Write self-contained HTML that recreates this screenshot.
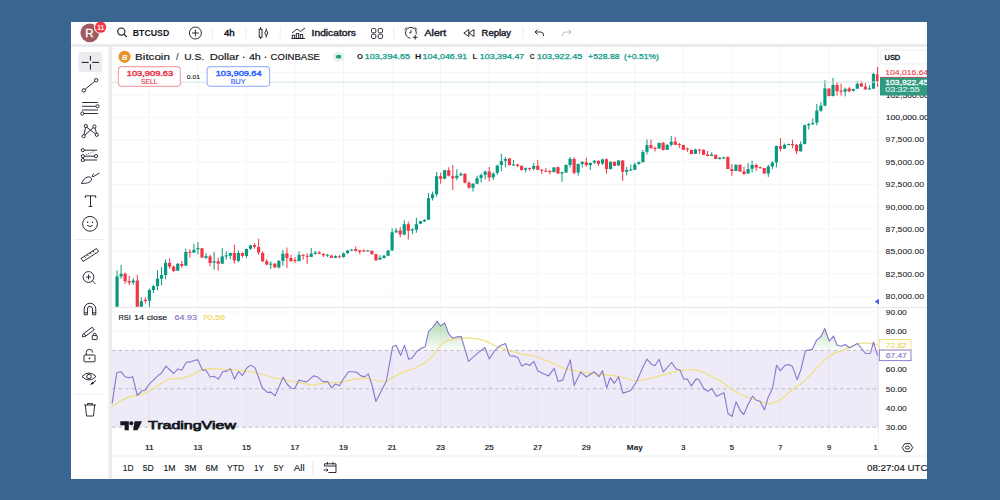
<!DOCTYPE html>
<html><head><meta charset="utf-8"><title>TradingView BTCUSD</title>
<style>
html,body{margin:0;padding:0;width:1000px;height:500px;overflow:hidden;background:#3b6591;}
svg{display:block;}
text{font-family:"Liberation Sans", sans-serif;}
</style></head>
<body>
<svg width="1000" height="500" viewBox="0 0 1000 500">
<defs><clipPath id="cmain"><rect x="112" y="47" width="766.5" height="260"/></clipPath></defs>
<rect x="0" y="0" width="1000" height="500" fill="#3b6591"/>
<defs><clipPath id="cpanel"><rect x="71" y="22" width="856" height="457"/></clipPath></defs><g clip-path="url(#cpanel)">
<rect x="71" y="22" width="856" height="457" fill="#ebebed"/>
<rect x="71" y="22" width="856" height="22" fill="#ffffff"/>
<rect x="71" y="47" width="37.5" height="432" fill="#ffffff"/>
<rect x="112" y="47" width="815" height="432" fill="#ffffff"/>
<line x1="149.3" y1="47" x2="149.3" y2="432" stroke="#f5f5f7" stroke-width="1"/>
<line x1="197.9" y1="47" x2="197.9" y2="432" stroke="#f5f5f7" stroke-width="1"/>
<line x1="246.4" y1="47" x2="246.4" y2="432" stroke="#f5f5f7" stroke-width="1"/>
<line x1="294.9" y1="47" x2="294.9" y2="432" stroke="#f5f5f7" stroke-width="1"/>
<line x1="343.5" y1="47" x2="343.5" y2="432" stroke="#f5f5f7" stroke-width="1"/>
<line x1="392.1" y1="47" x2="392.1" y2="432" stroke="#f5f5f7" stroke-width="1"/>
<line x1="440.6" y1="47" x2="440.6" y2="432" stroke="#f5f5f7" stroke-width="1"/>
<line x1="489.1" y1="47" x2="489.1" y2="432" stroke="#f5f5f7" stroke-width="1"/>
<line x1="537.7" y1="47" x2="537.7" y2="432" stroke="#f5f5f7" stroke-width="1"/>
<line x1="586.2" y1="47" x2="586.2" y2="432" stroke="#f5f5f7" stroke-width="1"/>
<line x1="634.8" y1="47" x2="634.8" y2="432" stroke="#f5f5f7" stroke-width="1"/>
<line x1="683.3" y1="47" x2="683.3" y2="432" stroke="#f5f5f7" stroke-width="1"/>
<line x1="731.9" y1="47" x2="731.9" y2="432" stroke="#f5f5f7" stroke-width="1"/>
<line x1="780.5" y1="47" x2="780.5" y2="432" stroke="#f5f5f7" stroke-width="1"/>
<line x1="829.0" y1="47" x2="829.0" y2="432" stroke="#f5f5f7" stroke-width="1"/>
<line x1="877.5" y1="47" x2="877.5" y2="432" stroke="#f5f5f7" stroke-width="1"/>
<line x1="112" y1="72.6" x2="878" y2="72.6" stroke="#f5f5f7" stroke-width="1"/>
<line x1="112" y1="94.9" x2="878" y2="94.9" stroke="#f5f5f7" stroke-width="1"/>
<line x1="112" y1="117.3" x2="878" y2="117.3" stroke="#f5f5f7" stroke-width="1"/>
<line x1="112" y1="139.7" x2="878" y2="139.7" stroke="#f5f5f7" stroke-width="1"/>
<line x1="112" y1="162.0" x2="878" y2="162.0" stroke="#f5f5f7" stroke-width="1"/>
<line x1="112" y1="184.4" x2="878" y2="184.4" stroke="#f5f5f7" stroke-width="1"/>
<line x1="112" y1="206.7" x2="878" y2="206.7" stroke="#f5f5f7" stroke-width="1"/>
<line x1="112" y1="229.1" x2="878" y2="229.1" stroke="#f5f5f7" stroke-width="1"/>
<line x1="112" y1="251.4" x2="878" y2="251.4" stroke="#f5f5f7" stroke-width="1"/>
<line x1="112" y1="273.8" x2="878" y2="273.8" stroke="#f5f5f7" stroke-width="1"/>
<line x1="112" y1="296.1" x2="878" y2="296.1" stroke="#f5f5f7" stroke-width="1"/>
<line x1="878.5" y1="47" x2="878.5" y2="456" stroke="#f0f0f3" stroke-width="1"/>
<line x1="112" y1="307.5" x2="927" y2="307.5" stroke="#e6e6ea" stroke-width="1"/>
<line x1="112" y1="456" x2="927" y2="456" stroke="#f0f0f2" stroke-width="1"/>
<rect x="112" y="350.4" width="766.5" height="76.8" fill="#7e57c2" fill-opacity="0.125"/>
<line x1="112" y1="312.0" x2="878" y2="312.0" stroke="#f5f5f7" stroke-width="1"/>
<line x1="112" y1="331.2" x2="878" y2="331.2" stroke="#f5f5f7" stroke-width="1"/>
<line x1="112" y1="350.4" x2="878" y2="350.4" stroke="#bdbdc5" stroke-width="1" stroke-dasharray="3.5 3"/>
<line x1="112" y1="388.8" x2="878" y2="388.8" stroke="#bdbdc5" stroke-width="1" stroke-dasharray="3.5 3"/>
<line x1="112" y1="427.2" x2="878" y2="427.2" stroke="#bdbdc5" stroke-width="1" stroke-dasharray="3.5 3"/>
<defs><linearGradient id="gob" gradientUnits="userSpaceOnUse" x1="0" y1="321" x2="0" y2="350.4"><stop offset="0" stop-color="#66b96a" stop-opacity="0.5"/><stop offset="1" stop-color="#66b96a" stop-opacity="0.03"/></linearGradient><clipPath id="cob"><rect x="112" y="300" width="766" height="50.4"/></clipPath></defs>
<polygon points="112.1,350.4 112.1,403.6 116.7,372.8 120.9,371.7 125.1,376.7 128.9,377.7 132.7,376.7 137.3,395.5 142.2,390.7 145.0,390.3 149.9,383.3 158.3,375.3 161.1,373.5 166.0,366.1 173.7,373.5 177.9,368.9 181.7,370.3 186.3,362.3 190.5,361.9 194.7,360.2 198.0,359.9 202.4,370.3 205.9,370.0 210.1,377.0 213.9,376.3 218.5,379.1 222.7,371.7 226.9,371.1 230.4,368.6 234.6,379.1 238.6,371.4 242.4,375.6 246.6,368.3 250.6,365.1 255.1,367.9 262.5,388.2 267.4,392.4 270.9,392.1 275.1,395.9 283.1,377.3 287.0,384.0 291.2,388.2 294.7,388.5 298.9,380.1 303.1,381.2 306.6,381.9 313.6,375.9 317.1,376.7 323.4,381.9 327.6,381.5 331.6,387.9 335.3,384.0 339.5,385.7 343.0,379.5 348.4,371.7 353.5,371.7 357.0,372.5 360.5,375.6 364.7,376.9 368.2,373.9 371.7,384.0 375.9,401.5 386.3,381.3 392.6,346.7 396.1,345.3 400.7,355.4 404.5,345.3 408.7,359.3 412.2,357.9 417.1,351.2 421.3,348.1 425.1,347.0 428.7,330.9 432.5,327.7 437.1,321.1 440.5,326.0 444.7,322.9 448.6,333.7 452.8,338.3 456.7,336.9 461.2,336.5 468.5,361.3 475.2,355.4 480.1,351.2 485.0,347.7 489.2,358.9 495.5,349.8 499.7,345.9 505.4,343.5 509.6,355.7 513.8,356.1 517.8,357.4 521.7,366.1 526.2,363.7 529.7,365.5 533.9,361.3 537.7,370.7 543.0,373.5 548.6,375.9 554.2,368.3 558.1,381.5 562.6,380.1 570.3,359.9 574.1,385.4 580.8,372.1 586.4,377.0 594.1,371.7 599.0,376.7 602.5,370.7 606.7,387.9 610.2,377.7 614.4,383.3 618.6,376.7 622.8,393.1 630.5,390.7 636.8,381.2 643.2,366.5 646.9,359.1 651.6,364.4 654.9,365.7 659.1,359.3 663.3,371.9 671.7,362.5 675.9,368.8 680.1,370.2 683.6,378.9 687.5,379.3 691.3,385.9 696.2,378.9 699.0,379.7 704.0,389.0 707.8,391.2 711.8,388.5 716.5,396.2 724.0,392.8 728.0,413.5 732.0,416.5 736.0,401.8 740.5,411.0 743.8,414.5 748.0,404.5 752.5,396.2 756.0,400.0 760.0,401.2 764.5,409.8 768.0,397.8 772.5,388.5 776.6,365.2 780.4,370.6 785.2,365.2 788.8,364.6 792.4,366.4 797.2,379.6 800.8,370.0 805.4,350.8 812.2,349.4 816.5,340.2 821.0,336.5 824.8,328.5 829.2,341.2 833.5,336.0 837.0,345.0 841.0,346.2 845.0,344.5 849.5,347.8 857.5,343.5 862.0,349.0 865.5,353.5 870.5,353.2 873.5,342.0 877.5,355.3 877.5,350.4" fill="url(#gob)" clip-path="url(#cob)"/>
<polyline points="112.0,406.5 114.2,405.0 122.6,399.7 129.6,396.6 138.0,395.2 145.0,393.5 152.0,389.6 160.4,384.0 168.8,379.1 182.8,378.1 191.2,375.6 201.0,370.0 208.0,368.6 222.0,369.3 236.0,370.0 250.0,371.7 259.0,373.5 273.0,377.7 287.0,380.5 301.0,382.9 312.2,385.1 326.2,382.6 340.2,382.3 354.2,379.1 366.8,378.1 375.2,380.5 385.6,382.0 394.0,376.7 401.0,372.9 415.0,368.0 424.8,363.1 431.8,356.8 438.8,347.7 444.4,341.7 452.8,339.3 464.0,337.9 478.0,338.9 486.4,341.4 496.2,346.3 506.0,349.8 515.0,352.1 522.0,354.3 534.6,356.0 550.0,361.9 564.0,368.3 578.0,371.7 593.4,373.9 613.0,375.6 621.4,377.0 632.6,380.5 641.0,380.1 650.0,378.3 664.0,374.7 678.0,370.9 689.2,369.5 696.2,369.9 706.0,373.7 720.0,380.7 731.2,388.7 741.0,394.7 750.8,398.5 762.0,402.1 769.0,403.8 776.0,402.2 785.0,396.5 792.4,389.2 802.0,383.2 810.4,374.8 820.0,364.6 826.4,358.4 834.4,353.1 844.0,349.9 852.0,346.4 858.4,343.5 866.4,342.9 877.5,344.5" fill="none" stroke="#f2df80" stroke-width="1.2" stroke-linejoin="round"/>
<polyline points="112.1,403.6 116.7,372.8 120.9,371.7 125.1,376.7 128.9,377.7 132.7,376.7 137.3,395.5 142.2,390.7 145.0,390.3 149.9,383.3 158.3,375.3 161.1,373.5 166.0,366.1 173.7,373.5 177.9,368.9 181.7,370.3 186.3,362.3 190.5,361.9 194.7,360.2 198.0,359.9 202.4,370.3 205.9,370.0 210.1,377.0 213.9,376.3 218.5,379.1 222.7,371.7 226.9,371.1 230.4,368.6 234.6,379.1 238.6,371.4 242.4,375.6 246.6,368.3 250.6,365.1 255.1,367.9 262.5,388.2 267.4,392.4 270.9,392.1 275.1,395.9 283.1,377.3 287.0,384.0 291.2,388.2 294.7,388.5 298.9,380.1 303.1,381.2 306.6,381.9 313.6,375.9 317.1,376.7 323.4,381.9 327.6,381.5 331.6,387.9 335.3,384.0 339.5,385.7 343.0,379.5 348.4,371.7 353.5,371.7 357.0,372.5 360.5,375.6 364.7,376.9 368.2,373.9 371.7,384.0 375.9,401.5 386.3,381.3 392.6,346.7 396.1,345.3 400.7,355.4 404.5,345.3 408.7,359.3 412.2,357.9 417.1,351.2 421.3,348.1 425.1,347.0 428.7,330.9 432.5,327.7 437.1,321.1 440.5,326.0 444.7,322.9 448.6,333.7 452.8,338.3 456.7,336.9 461.2,336.5 468.5,361.3 475.2,355.4 480.1,351.2 485.0,347.7 489.2,358.9 495.5,349.8 499.7,345.9 505.4,343.5 509.6,355.7 513.8,356.1 517.8,357.4 521.7,366.1 526.2,363.7 529.7,365.5 533.9,361.3 537.7,370.7 543.0,373.5 548.6,375.9 554.2,368.3 558.1,381.5 562.6,380.1 570.3,359.9 574.1,385.4 580.8,372.1 586.4,377.0 594.1,371.7 599.0,376.7 602.5,370.7 606.7,387.9 610.2,377.7 614.4,383.3 618.6,376.7 622.8,393.1 630.5,390.7 636.8,381.2 643.2,366.5 646.9,359.1 651.6,364.4 654.9,365.7 659.1,359.3 663.3,371.9 671.7,362.5 675.9,368.8 680.1,370.2 683.6,378.9 687.5,379.3 691.3,385.9 696.2,378.9 699.0,379.7 704.0,389.0 707.8,391.2 711.8,388.5 716.5,396.2 724.0,392.8 728.0,413.5 732.0,416.5 736.0,401.8 740.5,411.0 743.8,414.5 748.0,404.5 752.5,396.2 756.0,400.0 760.0,401.2 764.5,409.8 768.0,397.8 772.5,388.5 776.6,365.2 780.4,370.6 785.2,365.2 788.8,364.6 792.4,366.4 797.2,379.6 800.8,370.0 805.4,350.8 812.2,349.4 816.5,340.2 821.0,336.5 824.8,328.5 829.2,341.2 833.5,336.0 837.0,345.0 841.0,346.2 845.0,344.5 849.5,347.8 857.5,343.5 862.0,349.0 865.5,353.5 870.5,353.2 873.5,342.0 877.5,355.3" fill="none" stroke="#8677cd" stroke-width="1.1" stroke-linejoin="round"/>
<g clip-path="url(#cmain)">
<rect x="116.55" y="270.4" width="1" height="36.3" fill="#089981"/>
<rect x="115.45" y="276.5" width="3.2" height="30.2" fill="#089981"/>
<rect x="120.59" y="264.9" width="1" height="13.8" fill="#089981"/>
<rect x="119.50" y="273.9" width="3.2" height="2.6" fill="#089981"/>
<rect x="124.64" y="272.6" width="1" height="11.2" fill="#f23645"/>
<rect x="123.54" y="273.7" width="3.2" height="7.5" fill="#f23645"/>
<rect x="128.69" y="275.9" width="1" height="9.4" fill="#f23645"/>
<rect x="127.59" y="281.2" width="3.2" height="1.5" fill="#f23645"/>
<rect x="132.73" y="278.1" width="1" height="6.8" fill="#089981"/>
<rect x="131.63" y="280.5" width="3.2" height="2.0" fill="#089981"/>
<rect x="136.78" y="274.8" width="1" height="31.9" fill="#f23645"/>
<rect x="135.68" y="280.5" width="3.2" height="26.2" fill="#f23645"/>
<rect x="140.82" y="297.4" width="1" height="9.3" fill="#089981"/>
<rect x="139.72" y="301.2" width="3.2" height="5.5" fill="#089981"/>
<rect x="144.87" y="297.4" width="1" height="6.0" fill="#f23645"/>
<rect x="143.77" y="299.9" width="3.2" height="1.1" fill="#f23645"/>
<rect x="148.91" y="288.6" width="1" height="18.4" fill="#089981"/>
<rect x="147.81" y="290.0" width="3.2" height="10.7" fill="#089981"/>
<rect x="152.95" y="284.7" width="1" height="8.3" fill="#089981"/>
<rect x="151.85" y="286.1" width="3.2" height="3.9" fill="#089981"/>
<rect x="157.00" y="270.4" width="1" height="19.8" fill="#089981"/>
<rect x="155.90" y="278.7" width="3.2" height="7.4" fill="#089981"/>
<rect x="161.04" y="267.1" width="1" height="18.2" fill="#089981"/>
<rect x="159.94" y="275.0" width="3.2" height="3.7" fill="#089981"/>
<rect x="165.09" y="259.4" width="1" height="19.8" fill="#089981"/>
<rect x="163.99" y="262.7" width="3.2" height="12.3" fill="#089981"/>
<rect x="169.13" y="258.3" width="1" height="10.5" fill="#f23645"/>
<rect x="168.03" y="262.9" width="3.2" height="3.7" fill="#f23645"/>
<rect x="173.18" y="265.5" width="1" height="6.5" fill="#f23645"/>
<rect x="172.08" y="266.6" width="3.2" height="4.4" fill="#f23645"/>
<rect x="177.22" y="263.0" width="1" height="8.0" fill="#089981"/>
<rect x="176.12" y="263.8" width="3.2" height="6.8" fill="#089981"/>
<rect x="181.27" y="261.0" width="1" height="6.7" fill="#f23645"/>
<rect x="180.17" y="264.0" width="3.2" height="1.8" fill="#f23645"/>
<rect x="185.31" y="248.7" width="1" height="17.0" fill="#089981"/>
<rect x="184.22" y="252.0" width="3.2" height="13.7" fill="#089981"/>
<rect x="189.36" y="249.2" width="1" height="8.3" fill="#f23645"/>
<rect x="188.26" y="251.7" width="3.2" height="1.0" fill="#f23645"/>
<rect x="193.41" y="243.9" width="1" height="9.1" fill="#089981"/>
<rect x="192.31" y="249.8" width="3.2" height="2.9" fill="#089981"/>
<rect x="197.45" y="242.0" width="1" height="12.5" fill="#089981"/>
<rect x="196.35" y="248.1" width="3.2" height="1.3" fill="#089981"/>
<rect x="201.50" y="248.0" width="1" height="10.0" fill="#f23645"/>
<rect x="200.40" y="248.3" width="3.2" height="9.2" fill="#f23645"/>
<rect x="205.54" y="253.0" width="1" height="6.1" fill="#089981"/>
<rect x="204.44" y="256.1" width="3.2" height="1.7" fill="#089981"/>
<rect x="209.58" y="254.7" width="1" height="11.6" fill="#f23645"/>
<rect x="208.48" y="256.4" width="3.2" height="6.6" fill="#f23645"/>
<rect x="213.63" y="252.0" width="1" height="17.6" fill="#089981"/>
<rect x="212.53" y="261.3" width="3.2" height="1.3" fill="#089981"/>
<rect x="217.68" y="257.5" width="1" height="13.2" fill="#f23645"/>
<rect x="216.58" y="261.3" width="3.2" height="2.4" fill="#f23645"/>
<rect x="221.72" y="248.1" width="1" height="15.9" fill="#089981"/>
<rect x="220.62" y="256.4" width="3.2" height="7.3" fill="#089981"/>
<rect x="225.76" y="251.4" width="1" height="8.3" fill="#089981"/>
<rect x="224.66" y="255.3" width="3.2" height="1.1" fill="#089981"/>
<rect x="229.81" y="252.5" width="1" height="6.5" fill="#089981"/>
<rect x="228.71" y="253.0" width="3.2" height="2.8" fill="#089981"/>
<rect x="233.85" y="244.6" width="1" height="18.9" fill="#f23645"/>
<rect x="232.75" y="253.0" width="3.2" height="7.4" fill="#f23645"/>
<rect x="237.90" y="250.3" width="1" height="12.1" fill="#089981"/>
<rect x="236.80" y="253.0" width="3.2" height="7.8" fill="#089981"/>
<rect x="241.94" y="252.5" width="1" height="5.0" fill="#f23645"/>
<rect x="240.84" y="253.0" width="3.2" height="2.8" fill="#f23645"/>
<rect x="245.99" y="248.7" width="1" height="9.3" fill="#089981"/>
<rect x="244.89" y="249.0" width="3.2" height="7.0" fill="#089981"/>
<rect x="250.03" y="244.8" width="1" height="5.2" fill="#089981"/>
<rect x="248.93" y="245.4" width="3.2" height="3.3" fill="#089981"/>
<rect x="254.08" y="243.2" width="1" height="5.5" fill="#f23645"/>
<rect x="252.98" y="245.1" width="3.2" height="1.7" fill="#f23645"/>
<rect x="258.12" y="238.8" width="1" height="15.9" fill="#f23645"/>
<rect x="257.02" y="247.0" width="3.2" height="5.5" fill="#f23645"/>
<rect x="262.17" y="251.4" width="1" height="10.4" fill="#f23645"/>
<rect x="261.07" y="253.0" width="3.2" height="8.3" fill="#f23645"/>
<rect x="266.21" y="259.1" width="1" height="6.1" fill="#f23645"/>
<rect x="265.11" y="261.3" width="3.2" height="3.3" fill="#f23645"/>
<rect x="270.26" y="261.3" width="1" height="7.7" fill="#089981"/>
<rect x="269.16" y="263.7" width="3.2" height="1.0" fill="#089981"/>
<rect x="274.31" y="263.0" width="1" height="5.0" fill="#f23645"/>
<rect x="273.20" y="263.7" width="3.2" height="3.7" fill="#f23645"/>
<rect x="278.35" y="260.2" width="1" height="8.3" fill="#089981"/>
<rect x="277.25" y="260.8" width="3.2" height="6.6" fill="#089981"/>
<rect x="282.39" y="249.8" width="1" height="15.9" fill="#089981"/>
<rect x="281.29" y="253.8" width="3.2" height="7.0" fill="#089981"/>
<rect x="286.44" y="247.6" width="1" height="20.3" fill="#f23645"/>
<rect x="285.34" y="253.4" width="3.2" height="4.6" fill="#f23645"/>
<rect x="290.49" y="254.7" width="1" height="7.2" fill="#f23645"/>
<rect x="289.38" y="258.0" width="3.2" height="3.1" fill="#f23645"/>
<rect x="294.53" y="256.9" width="1" height="6.1" fill="#f23645"/>
<rect x="293.43" y="260.0" width="3.2" height="1.0" fill="#f23645"/>
<rect x="298.57" y="251.4" width="1" height="9.9" fill="#089981"/>
<rect x="297.47" y="254.9" width="3.2" height="6.2" fill="#089981"/>
<rect x="302.62" y="254.2" width="1" height="5.5" fill="#f23645"/>
<rect x="301.52" y="254.7" width="3.2" height="1.1" fill="#f23645"/>
<rect x="306.67" y="253.0" width="1" height="11.0" fill="#f23645"/>
<rect x="305.56" y="255.8" width="3.2" height="1.0" fill="#f23645"/>
<rect x="310.71" y="247.9" width="1" height="9.2" fill="#089981"/>
<rect x="309.61" y="253.8" width="3.2" height="3.1" fill="#089981"/>
<rect x="314.75" y="250.8" width="1" height="3.9" fill="#089981"/>
<rect x="313.65" y="252.5" width="3.2" height="1.3" fill="#089981"/>
<rect x="318.80" y="251.2" width="1" height="3.0" fill="#f23645"/>
<rect x="317.70" y="252.5" width="3.2" height="1.3" fill="#f23645"/>
<rect x="322.84" y="253.4" width="1" height="3.7" fill="#f23645"/>
<rect x="321.74" y="253.8" width="3.2" height="1.5" fill="#f23645"/>
<rect x="326.89" y="253.8" width="1" height="3.1" fill="#089981"/>
<rect x="325.79" y="254.7" width="3.2" height="1.0" fill="#089981"/>
<rect x="330.94" y="254.9" width="1" height="3.1" fill="#f23645"/>
<rect x="329.83" y="255.6" width="3.2" height="2.2" fill="#f23645"/>
<rect x="334.98" y="255.3" width="1" height="2.8" fill="#089981"/>
<rect x="333.88" y="256.1" width="3.2" height="1.7" fill="#089981"/>
<rect x="339.02" y="255.1" width="1" height="3.0" fill="#f23645"/>
<rect x="337.92" y="256.4" width="3.2" height="1.0" fill="#f23645"/>
<rect x="343.07" y="252.5" width="1" height="5.2" fill="#089981"/>
<rect x="341.97" y="253.4" width="3.2" height="3.6" fill="#089981"/>
<rect x="347.12" y="249.9" width="1" height="3.9" fill="#089981"/>
<rect x="346.01" y="250.5" width="3.2" height="2.6" fill="#089981"/>
<rect x="351.16" y="249.0" width="1" height="1.8" fill="#089981"/>
<rect x="350.06" y="249.6" width="3.2" height="1.0" fill="#089981"/>
<rect x="355.20" y="246.4" width="1" height="5.2" fill="#f23645"/>
<rect x="354.10" y="249.0" width="3.2" height="1.8" fill="#f23645"/>
<rect x="359.25" y="249.9" width="1" height="4.5" fill="#f23645"/>
<rect x="358.15" y="250.3" width="3.2" height="1.5" fill="#f23645"/>
<rect x="363.30" y="249.2" width="1" height="2.9" fill="#f23645"/>
<rect x="362.19" y="250.5" width="3.2" height="1.0" fill="#f23645"/>
<rect x="367.34" y="249.9" width="1" height="1.7" fill="#089981"/>
<rect x="366.24" y="250.5" width="3.2" height="1.0" fill="#089981"/>
<rect x="371.38" y="250.3" width="1" height="4.1" fill="#f23645"/>
<rect x="370.28" y="250.8" width="3.2" height="3.4" fill="#f23645"/>
<rect x="375.43" y="253.8" width="1" height="6.9" fill="#f23645"/>
<rect x="374.33" y="254.2" width="3.2" height="6.1" fill="#f23645"/>
<rect x="379.48" y="255.1" width="1" height="4.8" fill="#089981"/>
<rect x="378.38" y="257.7" width="3.2" height="1.9" fill="#089981"/>
<rect x="383.52" y="255.1" width="1" height="3.2" fill="#089981"/>
<rect x="382.42" y="255.7" width="3.2" height="2.4" fill="#089981"/>
<rect x="387.56" y="249.9" width="1" height="6.1" fill="#089981"/>
<rect x="386.46" y="250.5" width="3.2" height="5.2" fill="#089981"/>
<rect x="391.61" y="228.4" width="1" height="22.4" fill="#089981"/>
<rect x="390.51" y="232.3" width="3.2" height="18.2" fill="#089981"/>
<rect x="395.66" y="228.1" width="1" height="4.9" fill="#089981"/>
<rect x="394.56" y="230.7" width="3.2" height="1.6" fill="#089981"/>
<rect x="399.70" y="227.1" width="1" height="10.1" fill="#f23645"/>
<rect x="398.60" y="230.4" width="3.2" height="3.9" fill="#f23645"/>
<rect x="403.75" y="220.3" width="1" height="14.9" fill="#089981"/>
<rect x="402.64" y="224.2" width="3.2" height="10.4" fill="#089981"/>
<rect x="407.79" y="221.6" width="1" height="17.9" fill="#f23645"/>
<rect x="406.69" y="224.2" width="3.2" height="6.5" fill="#f23645"/>
<rect x="411.83" y="228.2" width="1" height="6.0" fill="#089981"/>
<rect x="410.73" y="229.3" width="3.2" height="1.2" fill="#089981"/>
<rect x="415.88" y="217.7" width="1" height="15.0" fill="#089981"/>
<rect x="414.78" y="224.2" width="3.2" height="5.5" fill="#089981"/>
<rect x="419.93" y="220.8" width="1" height="3.4" fill="#089981"/>
<rect x="418.82" y="221.2" width="3.2" height="2.5" fill="#089981"/>
<rect x="423.97" y="219.2" width="1" height="2.6" fill="#089981"/>
<rect x="422.87" y="220.0" width="3.2" height="1.5" fill="#089981"/>
<rect x="428.01" y="193.0" width="1" height="27.0" fill="#089981"/>
<rect x="426.91" y="198.2" width="3.2" height="21.5" fill="#089981"/>
<rect x="432.06" y="191.5" width="1" height="9.0" fill="#089981"/>
<rect x="430.96" y="194.2" width="3.2" height="4.0" fill="#089981"/>
<rect x="436.11" y="172.0" width="1" height="24.7" fill="#089981"/>
<rect x="435.00" y="176.2" width="3.2" height="18.0" fill="#089981"/>
<rect x="440.15" y="172.7" width="1" height="11.0" fill="#f23645"/>
<rect x="439.05" y="176.2" width="3.2" height="2.5" fill="#f23645"/>
<rect x="444.19" y="169.8" width="1" height="9.4" fill="#089981"/>
<rect x="443.09" y="170.2" width="3.2" height="8.5" fill="#089981"/>
<rect x="448.24" y="167.2" width="1" height="9.3" fill="#f23645"/>
<rect x="447.14" y="170.2" width="3.2" height="5.5" fill="#f23645"/>
<rect x="452.29" y="165.2" width="1" height="24.8" fill="#f23645"/>
<rect x="451.19" y="176.2" width="3.2" height="2.1" fill="#f23645"/>
<rect x="456.33" y="169.3" width="1" height="10.9" fill="#089981"/>
<rect x="455.23" y="175.7" width="3.2" height="2.3" fill="#089981"/>
<rect x="460.38" y="172.3" width="1" height="3.9" fill="#089981"/>
<rect x="459.27" y="173.8" width="3.2" height="1.5" fill="#089981"/>
<rect x="464.42" y="173.2" width="1" height="10.0" fill="#f23645"/>
<rect x="463.32" y="173.8" width="3.2" height="9.0" fill="#f23645"/>
<rect x="468.47" y="181.3" width="1" height="7.2" fill="#f23645"/>
<rect x="467.37" y="182.8" width="3.2" height="4.9" fill="#f23645"/>
<rect x="472.51" y="183.2" width="1" height="8.3" fill="#089981"/>
<rect x="471.41" y="183.7" width="3.2" height="4.0" fill="#089981"/>
<rect x="476.56" y="175.7" width="1" height="8.6" fill="#089981"/>
<rect x="475.45" y="178.3" width="3.2" height="5.4" fill="#089981"/>
<rect x="480.60" y="173.5" width="1" height="9.0" fill="#089981"/>
<rect x="479.50" y="175.0" width="3.2" height="3.0" fill="#089981"/>
<rect x="484.64" y="170.5" width="1" height="9.0" fill="#089981"/>
<rect x="483.54" y="171.6" width="3.2" height="3.2" fill="#089981"/>
<rect x="488.69" y="167.0" width="1" height="14.5" fill="#f23645"/>
<rect x="487.59" y="171.5" width="3.2" height="6.0" fill="#f23645"/>
<rect x="492.74" y="172.5" width="1" height="7.5" fill="#089981"/>
<rect x="491.63" y="173.5" width="3.2" height="4.0" fill="#089981"/>
<rect x="496.78" y="164.8" width="1" height="10.2" fill="#089981"/>
<rect x="495.68" y="165.5" width="3.2" height="7.3" fill="#089981"/>
<rect x="500.82" y="153.8" width="1" height="17.4" fill="#089981"/>
<rect x="499.72" y="161.2" width="3.2" height="3.8" fill="#089981"/>
<rect x="504.87" y="156.8" width="1" height="10.7" fill="#089981"/>
<rect x="503.77" y="159.0" width="3.2" height="1.8" fill="#089981"/>
<rect x="508.92" y="158.0" width="1" height="7.5" fill="#f23645"/>
<rect x="507.81" y="158.5" width="3.2" height="6.5" fill="#f23645"/>
<rect x="512.96" y="160.0" width="1" height="5.8" fill="#089981"/>
<rect x="511.86" y="164.5" width="3.2" height="1.0" fill="#089981"/>
<rect x="517.00" y="163.8" width="1" height="3.2" fill="#f23645"/>
<rect x="515.90" y="164.5" width="3.2" height="1.3" fill="#f23645"/>
<rect x="521.05" y="165.5" width="1" height="5.0" fill="#f23645"/>
<rect x="519.95" y="165.8" width="3.2" height="4.2" fill="#f23645"/>
<rect x="525.10" y="167.5" width="1" height="5.0" fill="#089981"/>
<rect x="524.00" y="168.2" width="3.2" height="1.6" fill="#089981"/>
<rect x="529.14" y="167.5" width="1" height="3.3" fill="#f23645"/>
<rect x="528.04" y="168.2" width="3.2" height="1.0" fill="#f23645"/>
<rect x="533.18" y="163.0" width="1" height="7.5" fill="#089981"/>
<rect x="532.08" y="166.0" width="3.2" height="2.8" fill="#089981"/>
<rect x="537.23" y="160.0" width="1" height="10.2" fill="#f23645"/>
<rect x="536.13" y="165.8" width="3.2" height="4.0" fill="#f23645"/>
<rect x="541.27" y="169.0" width="1" height="5.0" fill="#f23645"/>
<rect x="540.17" y="169.8" width="3.2" height="1.0" fill="#f23645"/>
<rect x="545.32" y="168.2" width="1" height="3.8" fill="#f23645"/>
<rect x="544.22" y="170.8" width="3.2" height="1.0" fill="#f23645"/>
<rect x="549.37" y="170.0" width="1" height="4.5" fill="#f23645"/>
<rect x="548.26" y="171.0" width="3.2" height="1.0" fill="#f23645"/>
<rect x="553.41" y="167.0" width="1" height="5.5" fill="#089981"/>
<rect x="552.31" y="167.5" width="3.2" height="4.5" fill="#089981"/>
<rect x="557.45" y="166.5" width="1" height="7.5" fill="#f23645"/>
<rect x="556.35" y="167.2" width="3.2" height="6.3" fill="#f23645"/>
<rect x="561.50" y="171.8" width="1" height="10.2" fill="#089981"/>
<rect x="560.40" y="172.2" width="3.2" height="1.3" fill="#089981"/>
<rect x="565.54" y="164.5" width="1" height="8.5" fill="#089981"/>
<rect x="564.44" y="165.0" width="3.2" height="7.5" fill="#089981"/>
<rect x="569.59" y="157.0" width="1" height="10.5" fill="#089981"/>
<rect x="568.49" y="158.8" width="3.2" height="6.2" fill="#089981"/>
<rect x="573.63" y="157.2" width="1" height="17.3" fill="#f23645"/>
<rect x="572.53" y="159.0" width="3.2" height="13.8" fill="#f23645"/>
<rect x="577.68" y="163.5" width="1" height="12.3" fill="#089981"/>
<rect x="576.58" y="164.0" width="3.2" height="8.5" fill="#089981"/>
<rect x="581.73" y="161.0" width="1" height="6.5" fill="#089981"/>
<rect x="580.62" y="162.0" width="3.2" height="2.0" fill="#089981"/>
<rect x="585.77" y="157.8" width="1" height="9.2" fill="#f23645"/>
<rect x="584.67" y="162.2" width="3.2" height="2.8" fill="#f23645"/>
<rect x="589.81" y="162.5" width="1" height="7.3" fill="#089981"/>
<rect x="588.71" y="163.0" width="3.2" height="2.2" fill="#089981"/>
<rect x="593.86" y="160.0" width="1" height="4.0" fill="#089981"/>
<rect x="592.76" y="160.8" width="3.2" height="1.7" fill="#089981"/>
<rect x="597.90" y="160.5" width="1" height="5.5" fill="#f23645"/>
<rect x="596.80" y="160.8" width="3.2" height="3.0" fill="#f23645"/>
<rect x="601.95" y="158.5" width="1" height="6.5" fill="#089981"/>
<rect x="600.85" y="159.5" width="3.2" height="4.0" fill="#089981"/>
<rect x="606.00" y="158.5" width="1" height="15.0" fill="#f23645"/>
<rect x="604.89" y="159.2" width="3.2" height="9.8" fill="#f23645"/>
<rect x="610.04" y="161.5" width="1" height="8.0" fill="#089981"/>
<rect x="608.94" y="161.8" width="3.2" height="7.2" fill="#089981"/>
<rect x="614.08" y="161.5" width="1" height="4.7" fill="#f23645"/>
<rect x="612.98" y="161.8" width="3.2" height="4.0" fill="#f23645"/>
<rect x="618.13" y="160.0" width="1" height="5.8" fill="#089981"/>
<rect x="617.03" y="160.5" width="3.2" height="5.0" fill="#089981"/>
<rect x="622.17" y="160.0" width="1" height="21.0" fill="#f23645"/>
<rect x="621.07" y="160.5" width="3.2" height="11.3" fill="#f23645"/>
<rect x="626.22" y="167.0" width="1" height="8.5" fill="#089981"/>
<rect x="625.12" y="170.0" width="3.2" height="1.8" fill="#089981"/>
<rect x="630.26" y="164.5" width="1" height="6.5" fill="#089981"/>
<rect x="629.16" y="169.5" width="3.2" height="1.0" fill="#089981"/>
<rect x="634.31" y="162.5" width="1" height="7.5" fill="#089981"/>
<rect x="633.21" y="164.5" width="3.2" height="5.3" fill="#089981"/>
<rect x="638.35" y="161.5" width="1" height="3.0" fill="#089981"/>
<rect x="637.25" y="162.2" width="3.2" height="1.8" fill="#089981"/>
<rect x="642.40" y="150.0" width="1" height="12.5" fill="#089981"/>
<rect x="641.30" y="152.0" width="3.2" height="10.2" fill="#089981"/>
<rect x="646.44" y="139.5" width="1" height="15.0" fill="#089981"/>
<rect x="645.34" y="145.2" width="3.2" height="6.6" fill="#089981"/>
<rect x="650.49" y="139.5" width="1" height="9.0" fill="#f23645"/>
<rect x="649.39" y="145.2" width="3.2" height="3.0" fill="#f23645"/>
<rect x="654.53" y="146.5" width="1" height="5.0" fill="#f23645"/>
<rect x="653.43" y="148.0" width="3.2" height="1.0" fill="#f23645"/>
<rect x="658.58" y="142.5" width="1" height="6.3" fill="#089981"/>
<rect x="657.48" y="143.0" width="3.2" height="5.5" fill="#089981"/>
<rect x="662.62" y="142.0" width="1" height="8.5" fill="#f23645"/>
<rect x="661.52" y="142.8" width="3.2" height="7.2" fill="#f23645"/>
<rect x="666.67" y="144.0" width="1" height="6.0" fill="#089981"/>
<rect x="665.57" y="145.0" width="3.2" height="4.8" fill="#089981"/>
<rect x="670.71" y="136.0" width="1" height="10.5" fill="#089981"/>
<rect x="669.61" y="141.8" width="3.2" height="3.0" fill="#089981"/>
<rect x="674.76" y="137.0" width="1" height="8.2" fill="#f23645"/>
<rect x="673.66" y="141.5" width="3.2" height="3.3" fill="#f23645"/>
<rect x="678.80" y="142.8" width="1" height="5.2" fill="#f23645"/>
<rect x="677.70" y="144.0" width="3.2" height="1.0" fill="#f23645"/>
<rect x="682.85" y="144.8" width="1" height="5.2" fill="#f23645"/>
<rect x="681.75" y="145.0" width="3.2" height="4.8" fill="#f23645"/>
<rect x="686.89" y="147.5" width="1" height="4.3" fill="#f23645"/>
<rect x="685.79" y="148.5" width="3.2" height="1.0" fill="#f23645"/>
<rect x="690.94" y="149.8" width="1" height="4.4" fill="#f23645"/>
<rect x="689.84" y="150.0" width="3.2" height="4.0" fill="#f23645"/>
<rect x="694.98" y="148.8" width="1" height="5.2" fill="#089981"/>
<rect x="693.88" y="149.5" width="3.2" height="4.3" fill="#089981"/>
<rect x="699.03" y="149.0" width="1" height="5.0" fill="#f23645"/>
<rect x="697.93" y="149.5" width="3.2" height="1.0" fill="#f23645"/>
<rect x="703.07" y="149.5" width="1" height="5.5" fill="#f23645"/>
<rect x="701.97" y="149.8" width="3.2" height="5.0" fill="#f23645"/>
<rect x="707.12" y="151.0" width="1" height="5.5" fill="#f23645"/>
<rect x="706.02" y="154.5" width="3.2" height="1.5" fill="#f23645"/>
<rect x="711.16" y="152.2" width="1" height="4.0" fill="#089981"/>
<rect x="710.06" y="154.5" width="3.2" height="1.5" fill="#089981"/>
<rect x="715.21" y="154.5" width="1" height="4.7" fill="#f23645"/>
<rect x="714.11" y="154.8" width="3.2" height="4.2" fill="#f23645"/>
<rect x="719.25" y="157.0" width="1" height="2.5" fill="#089981"/>
<rect x="718.15" y="157.8" width="3.2" height="1.2" fill="#089981"/>
<rect x="723.30" y="156.8" width="1" height="2.2" fill="#089981"/>
<rect x="722.20" y="157.2" width="3.2" height="1.0" fill="#089981"/>
<rect x="727.34" y="156.2" width="1" height="13.0" fill="#f23645"/>
<rect x="726.24" y="157.2" width="3.2" height="11.8" fill="#f23645"/>
<rect x="731.39" y="164.0" width="1" height="11.8" fill="#f23645"/>
<rect x="730.29" y="169.2" width="3.2" height="1.8" fill="#f23645"/>
<rect x="735.43" y="164.5" width="1" height="6.7" fill="#089981"/>
<rect x="734.33" y="164.8" width="3.2" height="6.2" fill="#089981"/>
<rect x="739.48" y="164.5" width="1" height="7.3" fill="#f23645"/>
<rect x="738.38" y="164.8" width="3.2" height="6.7" fill="#f23645"/>
<rect x="743.52" y="166.8" width="1" height="8.2" fill="#f23645"/>
<rect x="742.42" y="171.5" width="3.2" height="2.5" fill="#f23645"/>
<rect x="747.57" y="163.0" width="1" height="10.8" fill="#089981"/>
<rect x="746.47" y="169.0" width="3.2" height="4.5" fill="#089981"/>
<rect x="751.61" y="160.8" width="1" height="11.7" fill="#089981"/>
<rect x="750.51" y="165.0" width="3.2" height="3.8" fill="#089981"/>
<rect x="755.66" y="163.5" width="1" height="7.3" fill="#f23645"/>
<rect x="754.56" y="165.0" width="3.2" height="2.5" fill="#f23645"/>
<rect x="759.70" y="166.5" width="1" height="2.0" fill="#f23645"/>
<rect x="758.60" y="167.2" width="3.2" height="1.0" fill="#f23645"/>
<rect x="763.75" y="167.8" width="1" height="6.0" fill="#f23645"/>
<rect x="762.65" y="168.0" width="3.2" height="5.5" fill="#f23645"/>
<rect x="767.79" y="165.0" width="1" height="12.0" fill="#089981"/>
<rect x="766.69" y="166.5" width="3.2" height="7.0" fill="#089981"/>
<rect x="771.84" y="161.5" width="1" height="7.5" fill="#089981"/>
<rect x="770.74" y="162.5" width="3.2" height="4.0" fill="#089981"/>
<rect x="775.88" y="145.5" width="1" height="22.0" fill="#089981"/>
<rect x="774.78" y="146.0" width="3.2" height="16.5" fill="#089981"/>
<rect x="779.93" y="138.0" width="1" height="13.5" fill="#f23645"/>
<rect x="778.83" y="146.2" width="3.2" height="2.6" fill="#f23645"/>
<rect x="783.97" y="143.5" width="1" height="5.5" fill="#089981"/>
<rect x="782.87" y="144.8" width="3.2" height="3.8" fill="#089981"/>
<rect x="788.02" y="143.7" width="1" height="1.5" fill="#089981"/>
<rect x="786.92" y="144.0" width="3.2" height="1.0" fill="#089981"/>
<rect x="792.06" y="139.7" width="1" height="8.5" fill="#f23645"/>
<rect x="790.96" y="144.0" width="3.2" height="1.2" fill="#f23645"/>
<rect x="796.11" y="144.0" width="1" height="10.2" fill="#f23645"/>
<rect x="795.01" y="144.8" width="3.2" height="6.5" fill="#f23645"/>
<rect x="800.15" y="141.5" width="1" height="10.1" fill="#089981"/>
<rect x="799.05" y="144.0" width="3.2" height="7.3" fill="#089981"/>
<rect x="804.20" y="124.5" width="1" height="20.0" fill="#089981"/>
<rect x="803.10" y="125.3" width="3.2" height="18.7" fill="#089981"/>
<rect x="808.24" y="122.7" width="1" height="6.8" fill="#089981"/>
<rect x="807.14" y="124.0" width="3.2" height="1.3" fill="#089981"/>
<rect x="812.29" y="118.5" width="1" height="6.8" fill="#089981"/>
<rect x="811.19" y="123.0" width="3.2" height="1.0" fill="#089981"/>
<rect x="816.33" y="104.0" width="1" height="21.3" fill="#089981"/>
<rect x="815.23" y="110.5" width="3.2" height="12.2" fill="#089981"/>
<rect x="820.38" y="102.0" width="1" height="9.7" fill="#089981"/>
<rect x="819.28" y="105.7" width="3.2" height="5.1" fill="#089981"/>
<rect x="824.42" y="80.2" width="1" height="25.8" fill="#089981"/>
<rect x="823.32" y="88.4" width="3.2" height="17.3" fill="#089981"/>
<rect x="828.47" y="88.0" width="1" height="8.4" fill="#f23645"/>
<rect x="827.37" y="88.7" width="3.2" height="7.2" fill="#f23645"/>
<rect x="832.51" y="78.0" width="1" height="18.4" fill="#089981"/>
<rect x="831.41" y="85.0" width="3.2" height="11.0" fill="#089981"/>
<rect x="836.56" y="82.0" width="1" height="13.6" fill="#f23645"/>
<rect x="835.46" y="85.0" width="3.2" height="6.2" fill="#f23645"/>
<rect x="840.60" y="83.6" width="1" height="12.0" fill="#f23645"/>
<rect x="839.50" y="90.7" width="3.2" height="1.1" fill="#f23645"/>
<rect x="844.65" y="87.6" width="1" height="8.8" fill="#089981"/>
<rect x="843.55" y="89.0" width="3.2" height="2.6" fill="#089981"/>
<rect x="848.69" y="86.8" width="1" height="5.6" fill="#f23645"/>
<rect x="847.59" y="88.4" width="3.2" height="2.8" fill="#f23645"/>
<rect x="852.74" y="88.6" width="1" height="3.0" fill="#089981"/>
<rect x="851.64" y="89.0" width="3.2" height="1.8" fill="#089981"/>
<rect x="856.78" y="81.0" width="1" height="8.0" fill="#089981"/>
<rect x="855.68" y="83.8" width="3.2" height="4.9" fill="#089981"/>
<rect x="860.83" y="81.2" width="1" height="5.6" fill="#f23645"/>
<rect x="859.73" y="83.4" width="3.2" height="3.2" fill="#f23645"/>
<rect x="864.87" y="83.2" width="1" height="6.4" fill="#f23645"/>
<rect x="863.77" y="86.6" width="3.2" height="2.8" fill="#f23645"/>
<rect x="868.92" y="85.2" width="1" height="4.8" fill="#089981"/>
<rect x="867.82" y="88.4" width="3.2" height="1.0" fill="#089981"/>
<rect x="872.96" y="72.8" width="1" height="15.9" fill="#089981"/>
<rect x="871.86" y="74.0" width="3.2" height="14.7" fill="#089981"/>
<rect x="877.01" y="67.0" width="1" height="19.9" fill="#f23645"/>
<rect x="875.91" y="74.3" width="3.2" height="7.0" fill="#f23645"/>
</g>
<line x1="112" y1="82.2" x2="878" y2="82.2" stroke="#cfe3de" stroke-width="1"/>
<text x="885.60" y="142.45" font-size="7.82" fill="#131722" stroke="#131722" stroke-width="0.06" font-weight="normal" text-anchor="start" textLength="38.40" lengthAdjust="spacingAndGlyphs" >97,500.00</text>
<text x="885.60" y="164.80" font-size="7.82" fill="#131722" stroke="#131722" stroke-width="0.06" font-weight="normal" text-anchor="start" textLength="38.40" lengthAdjust="spacingAndGlyphs" >95,000.00</text>
<text x="885.60" y="187.15" font-size="7.82" fill="#131722" stroke="#131722" stroke-width="0.06" font-weight="normal" text-anchor="start" textLength="38.40" lengthAdjust="spacingAndGlyphs" >92,500.00</text>
<text x="885.60" y="209.50" font-size="7.82" fill="#131722" stroke="#131722" stroke-width="0.06" font-weight="normal" text-anchor="start" textLength="38.40" lengthAdjust="spacingAndGlyphs" >90,000.00</text>
<text x="885.60" y="231.85" font-size="7.82" fill="#131722" stroke="#131722" stroke-width="0.06" font-weight="normal" text-anchor="start" textLength="38.40" lengthAdjust="spacingAndGlyphs" >87,500.00</text>
<text x="885.60" y="254.20" font-size="7.82" fill="#131722" stroke="#131722" stroke-width="0.06" font-weight="normal" text-anchor="start" textLength="38.40" lengthAdjust="spacingAndGlyphs" >85,000.00</text>
<text x="885.60" y="276.55" font-size="7.82" fill="#131722" stroke="#131722" stroke-width="0.06" font-weight="normal" text-anchor="start" textLength="38.40" lengthAdjust="spacingAndGlyphs" >82,500.00</text>
<text x="885.60" y="298.90" font-size="7.82" fill="#131722" stroke="#131722" stroke-width="0.06" font-weight="normal" text-anchor="start" textLength="38.40" lengthAdjust="spacingAndGlyphs" >80,000.00</text>
<text x="885.80" y="120.10" font-size="7.82" fill="#131722" stroke="#131722" stroke-width="0.12" font-weight="normal" text-anchor="start" textLength="43.00" lengthAdjust="spacingAndGlyphs" >100,000.00</text>
<text x="885.80" y="98.00" font-size="7.82" fill="#131722" stroke="#131722" stroke-width="0.12" font-weight="normal" text-anchor="start" textLength="43.00" lengthAdjust="spacingAndGlyphs" >102,500.00</text>
<rect x="880" y="77" width="47" height="18.5" fill="#2e9a7e"/>
<line x1="880" y1="77.2" x2="927" y2="77.2" stroke="#f23645" stroke-width="0.8"/>
<rect x="880" y="66" width="47" height="10.6" fill="#ffffff"/>
<text x="885.30" y="75.00" font-size="7.82" fill="#f23645" stroke="#f23645" stroke-width="0.12" font-weight="normal" text-anchor="start" textLength="43.00" lengthAdjust="spacingAndGlyphs" >104,016.64</text>
<text x="885.30" y="85.20" font-size="7.82" fill="#ffffff" stroke="#ffffff" stroke-width="0.3" font-weight="normal" text-anchor="start" textLength="43.00" lengthAdjust="spacingAndGlyphs" >103,922.45</text>
<text x="885.30" y="92.20" font-size="7.82" fill="#e6f4f0" stroke="#e6f4f0" stroke-width="0.12" font-weight="normal" text-anchor="start" textLength="34.50" lengthAdjust="spacingAndGlyphs" >03:32:55</text>
<rect x="881" y="50" width="52" height="14" rx="3" fill="#ffffff" stroke="#ededf0" stroke-width="1"/>
<text x="884.60" y="59.60" font-size="6.42" fill="#131722" stroke="#131722" stroke-width="0.35" font-weight="normal" text-anchor="start" textLength="15.60" lengthAdjust="spacingAndGlyphs" >USD</text>
<polygon points="874.6,301.6 879,298.8 879,304.4" fill="#4d5bf5"/>
<text x="885.80" y="314.70" font-size="7.40" fill="#131722" stroke="#131722" stroke-width="0.06" font-weight="normal" text-anchor="start" textLength="21.00" lengthAdjust="spacingAndGlyphs" >90.00</text>
<text x="885.80" y="333.90" font-size="7.40" fill="#131722" stroke="#131722" stroke-width="0.06" font-weight="normal" text-anchor="start" textLength="21.00" lengthAdjust="spacingAndGlyphs" >80.00</text>
<text x="885.80" y="372.30" font-size="7.40" fill="#131722" stroke="#131722" stroke-width="0.06" font-weight="normal" text-anchor="start" textLength="21.00" lengthAdjust="spacingAndGlyphs" >60.00</text>
<text x="885.80" y="391.50" font-size="7.40" fill="#131722" stroke="#131722" stroke-width="0.06" font-weight="normal" text-anchor="start" textLength="21.00" lengthAdjust="spacingAndGlyphs" >50.00</text>
<text x="885.80" y="410.70" font-size="7.40" fill="#131722" stroke="#131722" stroke-width="0.06" font-weight="normal" text-anchor="start" textLength="21.00" lengthAdjust="spacingAndGlyphs" >40.00</text>
<text x="885.80" y="429.90" font-size="7.40" fill="#131722" stroke="#131722" stroke-width="0.06" font-weight="normal" text-anchor="start" textLength="21.00" lengthAdjust="spacingAndGlyphs" >30.00</text>
<rect x="879.3" y="339.5" width="31.7" height="10.6" fill="#ffffff" stroke="#f6e27c" stroke-width="1"/>
<text x="885.80" y="347.70" font-size="7.40" fill="#f0d24e" stroke="#f0d24e" stroke-width="0.12" font-weight="normal" text-anchor="start" textLength="21.00" lengthAdjust="spacingAndGlyphs" >72.62</text>
<rect x="879.3" y="350.1" width="31.7" height="10.5" fill="#ffffff" stroke="#8f7fd0" stroke-width="1"/>
<text x="885.80" y="358.20" font-size="7.40" fill="#7e6fc8" stroke="#7e6fc8" stroke-width="0.12" font-weight="normal" text-anchor="start" textLength="21.00" lengthAdjust="spacingAndGlyphs" >67.47</text>
<text x="149.30" y="450.30" font-size="7.54" fill="#131722" stroke="#131722" stroke-width="0.2" font-weight="normal" text-anchor="middle" textLength="8.80" lengthAdjust="spacingAndGlyphs" >11</text>
<text x="197.85" y="450.30" font-size="7.54" fill="#131722" stroke="#131722" stroke-width="0.2" font-weight="normal" text-anchor="middle" textLength="8.80" lengthAdjust="spacingAndGlyphs" >13</text>
<text x="246.40" y="450.30" font-size="7.54" fill="#131722" stroke="#131722" stroke-width="0.2" font-weight="normal" text-anchor="middle" textLength="8.80" lengthAdjust="spacingAndGlyphs" >15</text>
<text x="294.95" y="450.30" font-size="7.54" fill="#131722" stroke="#131722" stroke-width="0.2" font-weight="normal" text-anchor="middle" textLength="8.80" lengthAdjust="spacingAndGlyphs" >17</text>
<text x="343.50" y="450.30" font-size="7.54" fill="#131722" stroke="#131722" stroke-width="0.2" font-weight="normal" text-anchor="middle" textLength="8.80" lengthAdjust="spacingAndGlyphs" >19</text>
<text x="392.05" y="450.30" font-size="7.54" fill="#131722" stroke="#131722" stroke-width="0.2" font-weight="normal" text-anchor="middle" textLength="8.80" lengthAdjust="spacingAndGlyphs" >21</text>
<text x="440.60" y="450.30" font-size="7.54" fill="#131722" stroke="#131722" stroke-width="0.2" font-weight="normal" text-anchor="middle" textLength="8.80" lengthAdjust="spacingAndGlyphs" >23</text>
<text x="489.15" y="450.30" font-size="7.54" fill="#131722" stroke="#131722" stroke-width="0.2" font-weight="normal" text-anchor="middle" textLength="8.80" lengthAdjust="spacingAndGlyphs" >25</text>
<text x="537.70" y="450.30" font-size="7.54" fill="#131722" stroke="#131722" stroke-width="0.2" font-weight="normal" text-anchor="middle" textLength="8.80" lengthAdjust="spacingAndGlyphs" >27</text>
<text x="586.25" y="450.30" font-size="7.54" fill="#131722" stroke="#131722" stroke-width="0.2" font-weight="normal" text-anchor="middle" textLength="8.80" lengthAdjust="spacingAndGlyphs" >29</text>
<text x="634.80" y="450.30" font-size="7.54" fill="#131722" stroke="#131722" stroke-width="0.0" font-weight="bold" text-anchor="middle" textLength="16.00" lengthAdjust="spacingAndGlyphs" >May</text>
<text x="683.35" y="450.30" font-size="7.54" fill="#131722" stroke="#131722" stroke-width="0.2" font-weight="normal" text-anchor="middle" >3</text>
<text x="731.90" y="450.30" font-size="7.54" fill="#131722" stroke="#131722" stroke-width="0.2" font-weight="normal" text-anchor="middle" >5</text>
<text x="780.45" y="450.30" font-size="7.54" fill="#131722" stroke="#131722" stroke-width="0.2" font-weight="normal" text-anchor="middle" >7</text>
<text x="829.00" y="450.30" font-size="7.54" fill="#131722" stroke="#131722" stroke-width="0.2" font-weight="normal" text-anchor="middle" >9</text>
<text x="875.60" y="450.30" font-size="7.54" fill="#131722" stroke="#131722" stroke-width="0.2" font-weight="normal" text-anchor="middle" >1</text>
<g fill="none" stroke="#131722" stroke-width="0.9"><polygon points="902.2,447.6 904.8,443.6 910.2,443.6 912.8,447.6 910.2,451.6 904.8,451.6"/><ellipse cx="907.5" cy="447.6" rx="2.2" ry="1.5"/></g>
<text x="122.80" y="471.00" font-size="8.38" fill="#131722" stroke="#131722" stroke-width="0.1" font-weight="normal" text-anchor="start" textLength="10.70" lengthAdjust="spacingAndGlyphs" >1D</text>
<text x="142.70" y="471.00" font-size="8.38" fill="#131722" stroke="#131722" stroke-width="0.1" font-weight="normal" text-anchor="start" textLength="11.10" lengthAdjust="spacingAndGlyphs" >5D</text>
<text x="163.50" y="471.00" font-size="8.38" fill="#131722" stroke="#131722" stroke-width="0.1" font-weight="normal" text-anchor="start" textLength="12.00" lengthAdjust="spacingAndGlyphs" >1M</text>
<text x="184.50" y="471.00" font-size="8.38" fill="#131722" stroke="#131722" stroke-width="0.1" font-weight="normal" text-anchor="start" textLength="12.00" lengthAdjust="spacingAndGlyphs" >3M</text>
<text x="205.50" y="471.00" font-size="8.38" fill="#131722" stroke="#131722" stroke-width="0.1" font-weight="normal" text-anchor="start" textLength="12.50" lengthAdjust="spacingAndGlyphs" >6M</text>
<text x="227.10" y="471.00" font-size="8.38" fill="#131722" stroke="#131722" stroke-width="0.1" font-weight="normal" text-anchor="start" textLength="17.20" lengthAdjust="spacingAndGlyphs" >YTD</text>
<text x="254.10" y="471.00" font-size="8.38" fill="#131722" stroke="#131722" stroke-width="0.1" font-weight="normal" text-anchor="start" textLength="9.90" lengthAdjust="spacingAndGlyphs" >1Y</text>
<text x="273.70" y="471.00" font-size="8.38" fill="#131722" stroke="#131722" stroke-width="0.1" font-weight="normal" text-anchor="start" textLength="10.10" lengthAdjust="spacingAndGlyphs" >5Y</text>
<text x="293.80" y="471.00" font-size="8.38" fill="#131722" stroke="#131722" stroke-width="0.1" font-weight="normal" text-anchor="start" textLength="10.80" lengthAdjust="spacingAndGlyphs" >All</text>
<line x1="313" y1="461" x2="313" y2="475" stroke="#e6e6ea" stroke-width="1"/>
<g fill="none" stroke="#131722" stroke-width="0.9"><path d="M324.5,466 V463.8 H336 V472.5 H328.5"/><line x1="324.5" y1="466" x2="336" y2="466"/><line x1="327.5" y1="462" x2="327.5" y2="464.5"/><line x1="333" y1="462" x2="333" y2="464.5"/><path d="M323.5,470 H328 M326.5,468.5 L328,470 L326.5,471.5"/></g>
<text x="867.00" y="470.90" font-size="8.80" fill="#131722" stroke="#131722" stroke-width="0.15" font-weight="normal" text-anchor="start" textLength="60.50" lengthAdjust="spacingAndGlyphs" >08:27:04 UTC</text>
<text x="118.50" y="320.30" font-size="7.68" fill="#131722" stroke="#131722" stroke-width="0.15" font-weight="normal" text-anchor="start" textLength="12.30" lengthAdjust="spacingAndGlyphs" >RSI</text>
<text x="134.00" y="320.30" font-size="7.68" fill="#131722" stroke="#131722" stroke-width="0.15" font-weight="normal" text-anchor="start" textLength="10.10" lengthAdjust="spacingAndGlyphs" >14</text>
<text x="146.70" y="320.30" font-size="7.68" fill="#131722" stroke="#131722" stroke-width="0.15" font-weight="normal" text-anchor="start" textLength="20.50" lengthAdjust="spacingAndGlyphs" >close</text>
<text x="174.40" y="320.30" font-size="7.68" fill="#7e6fc8" stroke="#7e6fc8" stroke-width="0.12" font-weight="normal" text-anchor="start" textLength="22.50" lengthAdjust="spacingAndGlyphs" >64.93</text>
<text x="202.30" y="320.30" font-size="7.68" fill="#f0d24e" stroke="#f0d24e" stroke-width="0.12" font-weight="normal" text-anchor="start" textLength="22.80" lengthAdjust="spacingAndGlyphs" >70.59</text>
<g fill="#131722"><path d="M120.3,421.3 H128.8 V430.3 H124.6 V425.2 H120.3 Z"/><circle cx="131.3" cy="423.3" r="2"/><path d="M134.5,421.3 H142 L137.6,430.3 H133.2 Z"/></g>
<text x="148.00" y="429.40" font-size="11.73" fill="#131722" stroke="#131722" stroke-width="0.75" font-weight="normal" text-anchor="start" textLength="88.00" lengthAdjust="spacingAndGlyphs" >TradingView</text>
<circle cx="124.6" cy="56.8" r="6.1" fill="#ea922a"/>
<text x="124.6" y="59.6" font-size="7.5" font-weight="bold" fill="#ffffff" text-anchor="middle" font-style="italic">B</text>
<text x="135.10" y="60.10" font-size="9.22" fill="#131722" stroke="#131722" stroke-width="0.18" font-weight="normal" text-anchor="start" textLength="34.80" lengthAdjust="spacingAndGlyphs" >Bitcoin</text>
<text x="184.20" y="60.10" font-size="9.22" fill="#131722" stroke="#131722" stroke-width="0.18" font-weight="normal" text-anchor="start" textLength="20.00" lengthAdjust="spacingAndGlyphs" >U.S.</text>
<text x="209.80" y="60.10" font-size="9.22" fill="#131722" stroke="#131722" stroke-width="0.18" font-weight="normal" text-anchor="start" textLength="29.20" lengthAdjust="spacingAndGlyphs" >Dollar</text>
<text x="248.90" y="60.10" font-size="9.22" fill="#131722" stroke="#131722" stroke-width="0.18" font-weight="normal" text-anchor="start" textLength="11.90" lengthAdjust="spacingAndGlyphs" >4h</text>
<text x="270.60" y="60.10" font-size="9.22" fill="#131722" stroke="#131722" stroke-width="0.18" font-weight="normal" text-anchor="start" textLength="49.30" lengthAdjust="spacingAndGlyphs" >COINBASE</text>
<text x="177.40" y="60.10" font-size="9.22" fill="#131722" stroke="#131722" stroke-width="0.05" font-weight="normal" text-anchor="middle" >/</text>
<circle cx="243.8" cy="57.2" r="0.8" fill="#131722"/><circle cx="265.5" cy="57.2" r="0.8" fill="#131722"/>
<ellipse cx="338.6" cy="56.7" rx="5.8" ry="5" fill="#e2f2ed"/><ellipse cx="338.6" cy="56.7" rx="2.7" ry="1.9" fill="#1f9a7e"/>
<text x="357.00" y="59.40" font-size="7.82" fill="#131722" stroke="#131722" stroke-width="0" font-weight="bold" text-anchor="start" textLength="5.90" lengthAdjust="spacingAndGlyphs" >O</text>
<text x="364.70" y="59.40" font-size="7.82" fill="#089981" stroke="#089981" stroke-width="0.25" font-weight="normal" text-anchor="start" textLength="45.40" lengthAdjust="spacingAndGlyphs" >103,394.65</text>
<text x="415.00" y="59.40" font-size="7.82" fill="#131722" stroke="#131722" stroke-width="0" font-weight="bold" text-anchor="start" textLength="6.30" lengthAdjust="spacingAndGlyphs" >H</text>
<text x="422.60" y="59.40" font-size="7.82" fill="#089981" stroke="#089981" stroke-width="0.25" font-weight="normal" text-anchor="start" textLength="44.60" lengthAdjust="spacingAndGlyphs" >104,046.91</text>
<text x="472.60" y="59.40" font-size="7.82" fill="#131722" stroke="#131722" stroke-width="0" font-weight="bold" text-anchor="start" textLength="4.90" lengthAdjust="spacingAndGlyphs" >L</text>
<text x="479.80" y="59.40" font-size="7.82" fill="#089981" stroke="#089981" stroke-width="0.25" font-weight="normal" text-anchor="start" textLength="44.50" lengthAdjust="spacingAndGlyphs" >103,394.47</text>
<text x="529.70" y="59.40" font-size="7.82" fill="#131722" stroke="#131722" stroke-width="0" font-weight="bold" text-anchor="start" textLength="4.90" lengthAdjust="spacingAndGlyphs" >C</text>
<text x="536.90" y="59.40" font-size="7.82" fill="#089981" stroke="#089981" stroke-width="0.25" font-weight="normal" text-anchor="start" textLength="45.40" lengthAdjust="spacingAndGlyphs" >103,922.45</text>
<text x="588.10" y="59.40" font-size="7.82" fill="#089981" stroke="#089981" stroke-width="0.25" font-weight="normal" text-anchor="start" textLength="31.50" lengthAdjust="spacingAndGlyphs" >+528.88</text>
<text x="624.10" y="59.40" font-size="7.82" fill="#089981" stroke="#089981" stroke-width="0.25" font-weight="normal" text-anchor="start" textLength="34.70" lengthAdjust="spacingAndGlyphs" >(+0.51%)</text>
<rect x="118.4" y="66.7" width="62" height="19.6" rx="3.2" fill="#ffffff" stroke="#f2a3ac" stroke-width="1.2"/>
<text x="126.80" y="75.60" font-size="6.98" fill="#e63446" stroke="#e63446" stroke-width="0.4" font-weight="normal" text-anchor="start" textLength="46.40" lengthAdjust="spacingAndGlyphs" >103,909.63</text>
<text x="140.90" y="84.30" font-size="7.26" fill="#e63446" stroke="#e63446" stroke-width="0.15" font-weight="normal" text-anchor="start" textLength="16.50" lengthAdjust="spacingAndGlyphs" >SELL</text>
<text x="186.80" y="79.00" font-size="6.15" fill="#131722" stroke="#131722" stroke-width="0.12" font-weight="normal" text-anchor="start" textLength="13.20" lengthAdjust="spacingAndGlyphs" >0.01</text>
<rect x="207.2" y="66.7" width="62.4" height="19.6" rx="3.2" fill="#ffffff" stroke="#a3b6fa" stroke-width="1.2"/>
<text x="215.70" y="75.90" font-size="6.98" fill="#2962ff" stroke="#2962ff" stroke-width="0.4" font-weight="normal" text-anchor="start" textLength="45.90" lengthAdjust="spacingAndGlyphs" >103,909.64</text>
<text x="230.80" y="84.30" font-size="7.26" fill="#2962ff" stroke="#2962ff" stroke-width="0.15" font-weight="normal" text-anchor="start" textLength="14.70" lengthAdjust="spacingAndGlyphs" >BUY</text>
<circle cx="89.8" cy="32.8" r="9.4" fill="#9e5a5e"/>
<text x="89.4" y="36.9" font-size="11.5" fill="#ffffff" stroke="#ffffff" stroke-width="0.35" text-anchor="middle">R</text>
<circle cx="100.6" cy="27.2" r="6.6" fill="#ffffff"/><circle cx="100.6" cy="27.2" r="5.6" fill="#f23645"/>
<text x="100.6" y="29.6" font-size="6.5" font-weight="bold" fill="#ffffff" text-anchor="middle">11</text>
<g fill="none" stroke="#131722" stroke-width="1.1"><circle cx="121.3" cy="31.6" r="3.6"/><line x1="123.9" y1="34.2" x2="126.9" y2="37.2"/></g>
<text x="132.75" y="35.75" font-size="8.38" fill="#131722" stroke="#131722" stroke-width="0.0" font-weight="bold" text-anchor="start" textLength="36.50" lengthAdjust="spacingAndGlyphs" >BTCUSD</text>
<g fill="none" stroke="#131722" stroke-width="0.9"><circle cx="195.4" cy="33" r="6"/><line x1="192" y1="33" x2="198.8" y2="33"/><line x1="195.4" y1="29.6" x2="195.4" y2="36.4"/></g>
<line x1="212.4" y1="27" x2="212.4" y2="39" stroke="#ececef" stroke-width="1"/>
<line x1="246" y1="27" x2="246" y2="39" stroke="#ececef" stroke-width="1"/>
<line x1="280.2" y1="27" x2="280.2" y2="39" stroke="#ececef" stroke-width="1"/>
<line x1="393.8" y1="27" x2="393.8" y2="39" stroke="#ececef" stroke-width="1"/>
<line x1="523" y1="27" x2="523" y2="39" stroke="#ececef" stroke-width="1"/>
<text x="224.00" y="35.75" font-size="8.52" fill="#131722" stroke="#131722" stroke-width="0.4" font-weight="normal" text-anchor="start" textLength="10.75" lengthAdjust="spacingAndGlyphs" >4h</text>
<g fill="none" stroke="#131722" stroke-width="0.9"><rect x="259.2" y="29.2" width="2.8" height="8"/><line x1="260.6" y1="27" x2="260.6" y2="29.2"/><line x1="260.6" y1="37.2" x2="260.6" y2="39"/><path d="M266.3,30 L267.8,33 L266.3,36 L264.8,33 Z"/><line x1="266.3" y1="28.5" x2="266.3" y2="30"/><line x1="266.3" y1="36" x2="266.3" y2="37.5"/></g>
<g fill="none" stroke="#131722" stroke-width="0.9"><path d="M292,33 L297,29 L300.5,31.5 L305,28"/><rect x="292.3" y="35.2" width="2.4" height="3.3"/><rect x="296.3" y="33.6" width="2.4" height="4.9"/><rect x="300.3" y="34.6" width="2.4" height="3.9"/><line x1="291.5" y1="38.5" x2="305" y2="38.5"/></g>
<text x="311.60" y="35.70" font-size="8.38" fill="#1e222d" stroke="#1e222d" stroke-width="0.4" font-weight="normal" text-anchor="start" textLength="44.40" lengthAdjust="spacingAndGlyphs" >Indicators</text>
<g fill="none" stroke="#131722" stroke-width="0.9"><rect x="371.5" y="28.5" width="4.3" height="4.3" rx="1.2"/><rect x="378.2" y="28.5" width="4.3" height="4.3" rx="1.2"/><rect x="371.5" y="34.2" width="4.3" height="4.3" rx="1.2"/><rect x="378.2" y="34.2" width="4.3" height="4.3" rx="1.2"/></g>
<g fill="none" stroke="#131722" stroke-width="0.9"><path d="M416.1,34.3 A5.4,5.4 0 1 0 410.3,38.2"/><path d="M411,29.9 V32.9 H409.2"/><path d="M404.6,29.6 L407.2,27.4 M417.2,29.6 L414.6,27.4"/><path d="M412.9,37.3 H417.5 M415.2,35 V39.6"/></g>
<text x="424.60" y="36.00" font-size="8.38" fill="#1e222d" stroke="#1e222d" stroke-width="0.4" font-weight="normal" text-anchor="start" textLength="21.60" lengthAdjust="spacingAndGlyphs" >Alert</text>
<g fill="none" stroke="#131722" stroke-width="0.9"><path d="M468.8,29.5 L463.8,33 L468.8,36.5 Z"/><path d="M474,29.5 L469,33 L474,36.5 Z"/></g>
<text x="481.60" y="36.00" font-size="8.38" fill="#1e222d" stroke="#1e222d" stroke-width="0.4" font-weight="normal" text-anchor="start" textLength="29.40" lengthAdjust="spacingAndGlyphs" >Replay</text>
<g fill="none" stroke="#131722" stroke-width="0.9"><path d="M535,32 H540.5 A3,3 0 0 1 543.5,35 V36"/><path d="M537.5,29.5 L535,32 L537.5,34.5"/></g>
<g fill="none" stroke="#b2b5be" stroke-width="0.9"><path d="M571,32 H565.5 A3,3 0 0 0 562.5,35 V36"/><path d="M568.5,29.5 L571,32 L568.5,34.5"/></g>
<rect x="78.2" y="52" width="24.2" height="20" rx="3" fill="#ececee"/>
<g fill="none" stroke="#131722" stroke-width="1"><line x1="81.7" y1="62.4" x2="88.6" y2="62.4"/><line x1="92.2" y1="62.4" x2="99.1" y2="62.4"/><line x1="90.4" y1="55.8" x2="90.4" y2="60.6"/><line x1="90.4" y1="64.2" x2="90.4" y2="69.6"/></g>
<g fill="none" stroke="#131722" stroke-width="0.9"><circle cx="83.8" cy="90.4" r="1.7"/><circle cx="96.1" cy="80.2" r="1.7"/><line x1="85.1" y1="89.3" x2="94.8" y2="81.3"/></g>
<g fill="none" stroke="#131722" stroke-width="0.9"><line x1="82" y1="102.5" x2="97.9" y2="102.5"/><line x1="82" y1="106.3" x2="95.8" y2="106.3"/><circle cx="97.5" cy="106.3" r="1.6"/><line x1="82" y1="110" x2="97.9" y2="110"/><circle cx="82.3" cy="113.5" r="1.6"/><line x1="83.9" y1="113.5" x2="97.9" y2="113.5"/></g>
<g fill="none" stroke="#131722" stroke-width="0.9"><circle cx="85.8" cy="126" r="1.6"/><circle cx="94.4" cy="126.5" r="1.6"/><circle cx="83.6" cy="136.2" r="1.6"/><circle cx="96.8" cy="134.8" r="1.6"/><path d="M85.5,127.6 L84,134.6 M86.8,127.3 L95.6,134 M93.2,127.6 L84.9,135.2 M95,128 L96.5,133.2"/></g>
<g fill="none" stroke="#131722" stroke-width="0.9"><circle cx="82.8" cy="150.2" r="1.6"/><line x1="84.4" y1="150.2" x2="97" y2="150.2"/><circle cx="82.8" cy="156.2" r="1.6"/><line x1="84.4" y1="156.2" x2="94.4" y2="156.2"/><circle cx="96" cy="156.2" r="1.6"/><circle cx="82.8" cy="160" r="1.6"/><line x1="84.4" y1="160" x2="97" y2="160"/><path d="M86,154.5 L95,151.3" stroke-dasharray="0.8 1.6"/></g>
<g fill="none" stroke="#131722" stroke-width="0.9"><path d="M81.5,183.5 C83,180 85,177.5 88,177 C90.5,176.6 92.3,178.3 91.3,180.5 C90.2,182.6 86,183.5 81.5,183.5 Z"/><path d="M92,177.2 C92.5,175.5 93,174.5 93.5,173.5 M93,176.8 L99.5,173"/></g>
<g fill="none" stroke="#131722" stroke-width="0.9"><path d="M85.3,198 V195.9 H95.7 V198"/><line x1="90.5" y1="195.9" x2="90.5" y2="206.4"/><line x1="88.6" y1="206.4" x2="92.4" y2="206.4"/></g>
<g fill="none" stroke="#131722" stroke-width="0.9"><circle cx="90" cy="223.8" r="7.4"/><path d="M87.2,225.3 Q90,227.8 92.8,225.3"/></g><circle cx="87.6" cy="222.2" r="0.7" fill="#131722"/><circle cx="92.4" cy="222.2" r="0.7" fill="#131722"/>
<line x1="74" y1="239.6" x2="104" y2="239.6" stroke="#ececef" stroke-width="1"/>
<g fill="none" stroke="#131722" stroke-width="0.9"><path d="M81,258.5 L96.5,248.5 L98.6,251.5 L83.1,261.5 Z"/><path d="M84.5,256.3 L85.5,257.8 M87.3,254.5 L88.3,256 M90.1,252.7 L91.1,254.2 M92.9,250.9 L93.9,252.4"/></g>
<g fill="none" stroke="#131722" stroke-width="0.9"><circle cx="88.5" cy="277" r="5.4"/><line x1="92.4" y1="280.9" x2="95.5" y2="284"/><line x1="86" y1="277" x2="91" y2="277"/><line x1="88.5" y1="274.5" x2="88.5" y2="279.5"/></g>
<g fill="none" stroke="#131722" stroke-width="0.9"><path d="M84.2,314.8 V309 A5.8,5.8 0 0 1 95.8,309 V314.8 H92.6 V309 A2.6,2.6 0 0 0 87.4,309 V314.8 Z"/><line x1="84.2" y1="312.8" x2="87.4" y2="312.8"/><line x1="92.6" y1="312.8" x2="95.8" y2="312.8"/></g>
<g fill="none" stroke="#131722" stroke-width="0.9"><path d="M82.3,336.8 L83,334 L92.2,327.2 L94.2,329.8 L85,336.6 Z"/><line x1="83.8" y1="333.4" x2="85.8" y2="336"/><rect x="92.2" y="335.6" width="5" height="4" rx="0.5"/><path d="M93.3,335.6 V334.6 A1.4,1.4 0 0 1 96.1,334.6 V335.6"/></g>
<g fill="none" stroke="#131722" stroke-width="0.9"><rect x="84" y="355" width="11" height="6.8" rx="0.8"/><path d="M86.3,355 V352.5 A3.2,3.2 0 0 1 92.7,352.5"/></g><circle cx="89.5" cy="358.4" r="0.8" fill="#131722"/>
<g fill="none" stroke="#131722" stroke-width="0.9"><path d="M82,376.5 Q89,369.5 96,376.5 Q89,383.5 82,376.5 Z"/><circle cx="89" cy="376.5" r="2.2"/><path d="M90.5,384.5 L96,380.5"/></g><ellipse cx="92.5" cy="383.3" rx="1.6" ry="1" fill="#131722" transform="rotate(-35 92.5 383.3)"/>
<line x1="74" y1="394.2" x2="104" y2="394.2" stroke="#ececef" stroke-width="1"/>
<g fill="none" stroke="#131722" stroke-width="0.9"><line x1="84" y1="405" x2="96" y2="405"/><path d="M87.5,405 V403.6 H92.5 V405"/><path d="M85.3,405 L86.5,416 H93.5 L94.7,405"/></g>
</g>
</svg>
</body></html>
